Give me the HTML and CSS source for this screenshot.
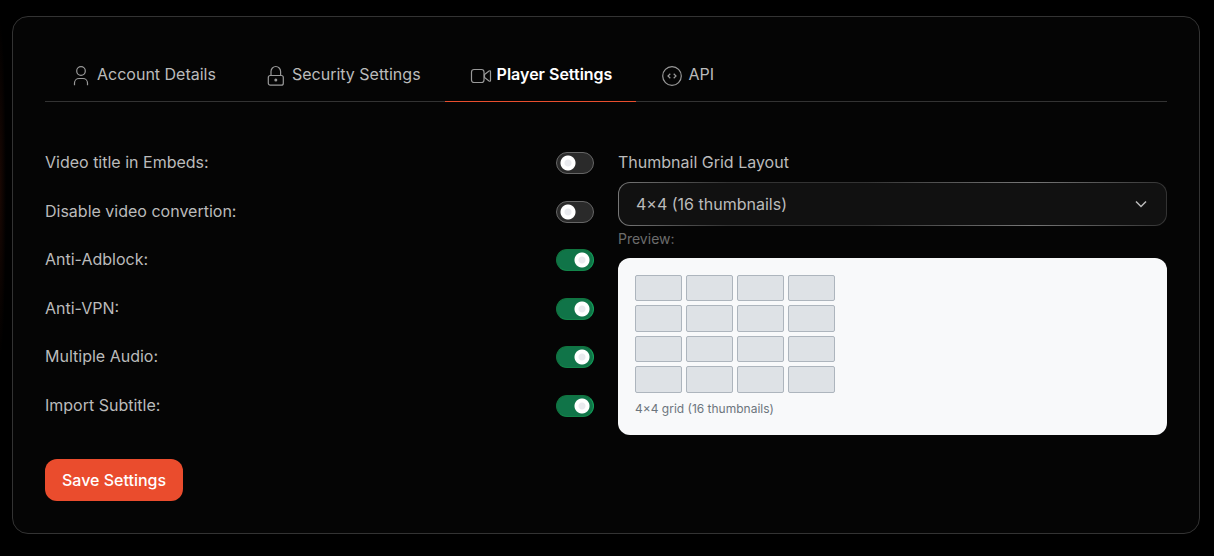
FILE: index.html
```html
<!DOCTYPE html>
<html lang="en">
<head>
    <meta charset="UTF-8">
    <meta name="viewport" content="width=device-width, initial-scale=1.0">
    <title>Player Settings</title>
    <link rel="stylesheet" href="styles.css">
</head>
<body>
    <main class="card">
        <nav class="tabs">
            <a class="tab" href="#account">
                <svg class="icon" viewBox="0 0 24 24" aria-hidden="true">
                    <circle cx="12" cy="7" r="4.3"/>
                    <path d="M5.5 21.2v-2.200a4.500 4.500 0 0 1 4.500-4.500h4a4.500 4.500 0 0 1 4.500 4.500v2.200"/>
                </svg>
                Account Details
            </a>
            <a class="tab" href="#security">
                <svg class="icon" viewBox="0 0 24 24" aria-hidden="true">
                    <path d="M7 11.500V7.500a4.800 5 0 0 1 9.600 0v4"/>
                    <rect x="4.300" y="11.500" width="15" height="9.700" rx="2"/>
                    <circle class="dot" cx="11.800" cy="16" r="1.500"/>
                </svg>
                Security Settings
            </a>
            <a class="tab active" href="#player">
                <svg class="icon" viewBox="0 0 24 24" aria-hidden="true">
                    <rect x="2.500" y="5.500" width="12.500" height="13" rx="2.500"/>
                    <path d="M15.500 10.500l4.500-3.500q1.500-.8 1.500.8v8.400q0 1.600-1.500.8l-4.500-3.500z"/>
                </svg>
                Player Settings
            </a>
            <a class="tab" href="#api">
                <svg class="icon" viewBox="0 0 24 24" aria-hidden="true">
                    <circle cx="12" cy="12" r="9.300"/>
                    <path d="M10.300 9.800L8 12l2.300 2.200M13.700 9.800L16 12l-2.300 2.200"/>
                </svg>
                API
            </a>
        </nav>

        <form>
            <div class="columns">
                <div class="options">
                    <div class="option">
                        <label for="videoTitle">Video title in Embeds:</label>
                        <input class="switch" type="checkbox" id="videoTitle">
                    </div>
                    <div class="option">
                        <label for="disableConvert">Disable video convertion:</label>
                        <input class="switch" type="checkbox" id="disableConvert">
                    </div>
                    <div class="option">
                        <label for="antiAdblock">Anti-Adblock:</label>
                        <input class="switch" type="checkbox" id="antiAdblock" checked>
                    </div>
                    <div class="option">
                        <label for="antiVpn">Anti-VPN:</label>
                        <input class="switch" type="checkbox" id="antiVpn" checked>
                    </div>
                    <div class="option">
                        <label for="multipleAudio">Multiple Audio:</label>
                        <input class="switch" type="checkbox" id="multipleAudio" checked>
                    </div>
                    <div class="option">
                        <label for="importSubtitle">Import Subtitle:</label>
                        <input class="switch" type="checkbox" id="importSubtitle" checked>
                    </div>
                </div>

                <div class="layout">
                    <label class="layout-label" for="gridLayout">Thumbnail Grid Layout</label>
                    <div class="select-wrap">
                        <select id="gridLayout">
                            <option selected>4×4 (16 thumbnails)</option>
                        </select>
                        <svg class="chevron" viewBox="0 0 12 8" aria-hidden="true">
                            <path d="M1 1.500l5 5 5-5"/>
                        </svg>
                    </div>
                    <p class="preview-label">Preview:</p>
                    <div class="preview">
                        <div class="thumbs">
                            <span></span><span></span><span></span><span></span>
                            <span></span><span></span><span></span><span></span>
                            <span></span><span></span><span></span><span></span>
                            <span></span><span></span><span></span><span></span>
                        </div>
                        <p class="caption">4×4 grid (16 thumbnails)</p>
                    </div>
                </div>
            </div>

            <button class="save" type="submit">Save Settings</button>
        </form>
    </main>
</body>
</html>
```

FILE: styles.css
```css
* {
    box-sizing: border-box;
}

body {
    margin: 0;
    padding: 16px 14px 22px 12px;
    font-family: Inter, sans-serif;
    font-size: 16px;
    line-height: 24px;
    color: #bbb;
    background: radial-gradient(ellipse 6px 170px at 0 190px, #1a0803, transparent) #000;
}

p {
    margin: 0;
}

.card {
    padding: 32px;
    border: 1px solid #333;
    border-radius: 16px;
    background-color: #050505;
}

/* Tabs */
.tabs {
    display: flex;
    margin-bottom: 48px;
    border-bottom: 1px solid #333;
}

.tab {
    display: flex;
    align-items: center;
    gap: 4px;
    margin-bottom: -1px;
    padding: 11px 24px 13px;
    border-bottom: 1px solid transparent;
    color: #bbb;
    text-decoration: none;
}

.tab.active {
    color: #fff;
    font-weight: 600;
    border-bottom-color: #e94e2e;
}

.icon {
    width: 24px;
    height: 28px;
    padding-top: 4px;
    fill: none;
    stroke: #999;
    stroke-width: 1.2;
}

.icon .dot {
    fill: #999;
    stroke: none;
}

/* Settings */
.columns {
    display: grid;
    grid-template-columns: 1fr 1fr;
    gap: 24px;
    margin-bottom: 24px;
}

.options {
    display: flex;
    flex-direction: column;
    justify-content: space-between;
    padding-bottom: 18px;
}

.option {
    display: flex;
    align-items: center;
    justify-content: space-between;
}

.switch {
    appearance: none;
    width: 38px;
    height: 22px;
    margin: 2px 0 0;
    border: 1px solid #666;
    border-radius: 11px;
    background: radial-gradient(circle at 11px 10px, #e9eaee 3px, #fff 4px, #fff 7px, transparent 8px) #2a2a2a;
    cursor: pointer;
}

.switch:checked {
    border-color: #10753f #12a45c #12854a #10753f;
    background: radial-gradient(circle at 25px 10px, #e9eaee 3px, #fff 4px, #fff 7px, transparent 8px) #107448;
}

.layout-label {
    display: block;
    margin-bottom: 8px;
}

.select-wrap {
    position: relative;
    margin-bottom: 2px;
}

select {
    appearance: none;
    display: block;
    width: 100%;
    height: 44px;
    padding: 0 17px;
    border: 1px solid transparent;
    border-radius: 12px;
    background:
        linear-gradient(#111, #111) padding-box,
        linear-gradient(90deg, #777, #333 20%, #333 45%, #777 75%, #333) border-box;
    color: #bbb;
    font: inherit;
}

.chevron {
    position: absolute;
    top: 18px;
    right: 20px;
    width: 12px;
    height: 8px;
    fill: none;
    stroke: #bbb;
    stroke-width: 1.5;
    pointer-events: none;
}

.preview-label {
    margin-bottom: 9px;
    font-size: 14px;
    line-height: 21px;
    color: #6c6c6c;
}

.preview {
    padding: 17px;
    border-radius: 12px;
    background-color: #f8f9fa;
}

.thumbs {
    display: grid;
    grid-template-columns: repeat(4, 1fr);
    gap: 4px;
    max-width: 200px;
    margin-bottom: 7px;
}

.thumbs span {
    aspect-ratio: 16 / 9;
    border: 1px solid #adb5bd;
    border-radius: 2px;
    background-color: #dee2e6;
}

.caption {
    font-size: 12px;
    line-height: 18px;
    color: #6c757d;
}

.save {
    height: 42px;
    padding: 0 17px;
    border: none;
    border-radius: 12px;
    background-color: #ea4c2d;
    color: #fff;
    font: inherit;
    font-weight: 500;
    cursor: pointer;
}
```
